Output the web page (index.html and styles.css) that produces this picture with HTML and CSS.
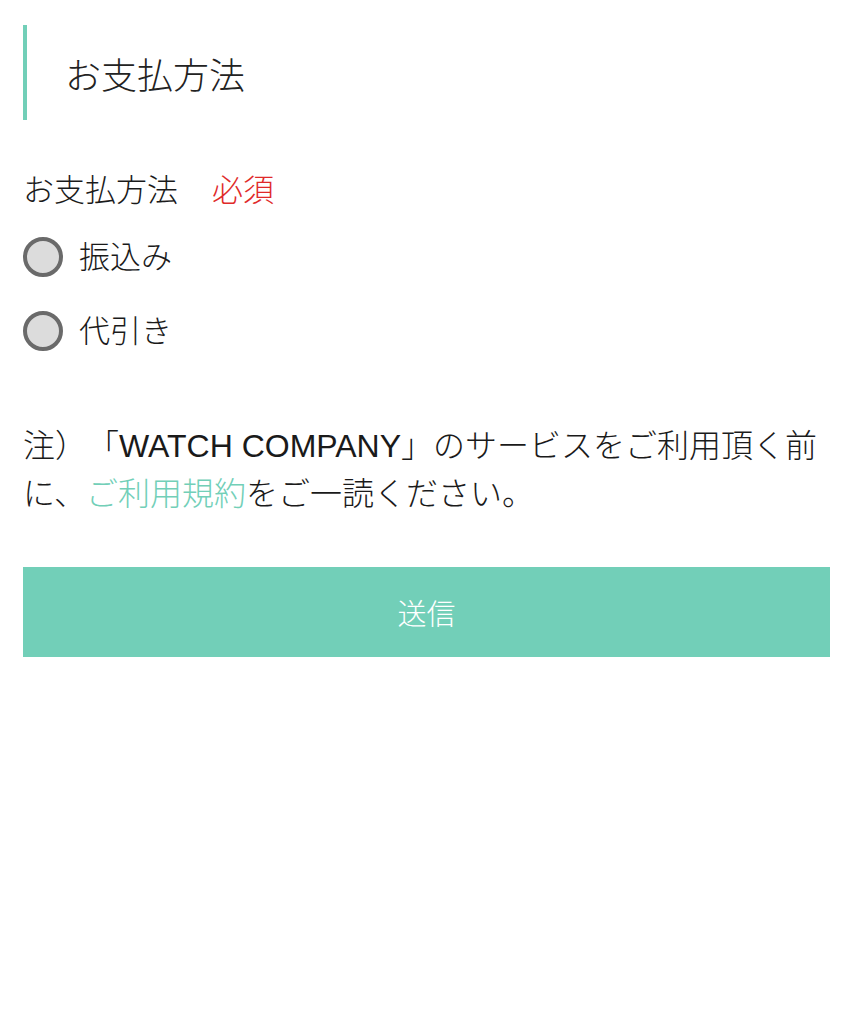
FILE: index.html
```html
<!DOCTYPE html>
<html lang="ja">
<head>
<meta charset="utf-8">
<title>お支払方法</title>
<link rel="stylesheet" href="styles.css">
</head>
<body>
<main class="page">
  <h2 class="section-title">お支払方法</h2>
  <form class="payment-form">
    <div class="field-label">お支払方法<span class="required">必須</span></div>
    <div class="radio-group">
      <label class="radio-row"><input type="radio" name="pay" class="radio"><span class="radio-text">振込み</span></label>
      <label class="radio-row"><input type="radio" name="pay" class="radio"><span class="radio-text">代引き</span></label>
    </div>
    <p class="note">注）「WATCH COMPANY」のサービスをご利用頂く前に、<a class="terms-link" href="#">ご利用規約</a>をご一読ください。</p>
    <button type="button" class="submit">送信</button>
  </form>
</main>
</body>
</html>
```
FILE: styles.css
```css
html, body {
  margin: 0;
  padding: 0;
  background: #ffffff;
}
body {
  font-family: "Liberation Sans", "Noto Sans CJK JP", sans-serif;
  font-weight: 300;
  color: #1a1a1a;
  text-spacing-trim: space-all;
}
.page {
  padding: 25px 24px 0 23px;
}
.section-title {
  margin: 0;
  height: 95px;
  display: flex;
  align-items: center;
  border-left: 4px solid #72cfb8;
  padding-left: 38px;
  font-size: 36px;
  font-weight: 300;
  color: #222;
}
.payment-form {
  display: flex;
  flex-direction: column;
}
.field-label {
  margin-top: 47px;
  font-size: 31px;
  line-height: 48px;
}
.required {
  color: #e02a2a;
  margin-left: 34px;
}
.radio-group {
  margin-top: 18px;
  display: flex;
  flex-direction: column;
  gap: 26px;
}
.radio-row {
  display: flex;
  align-items: center;
  gap: 16px;
  height: 48px;
  font-size: 31px;
}
.radio-text {
  padding-bottom: 6px;
}
.radio {
  appearance: none;
  -webkit-appearance: none;
  margin: 0;
  width: 40px;
  height: 40px;
  box-sizing: border-box;
  border-radius: 50%;
  border: 4px solid #6a6a6a;
  background: #dcdcdc;
  flex: none;
}
.note {
  margin: 67px 0 0 0;
  font-size: 32px;
  line-height: 48px;
}
.terms-link {
  color: #72cfb8;
  text-decoration: none;
}
.submit {
  margin-top: 49px;
  height: 90px;
  border: none;
  background: #72cfb8;
  color: #ffffff;
  font-family: inherit;
  font-weight: 300;
  font-size: 29px;
  width: 100%;
}
```
